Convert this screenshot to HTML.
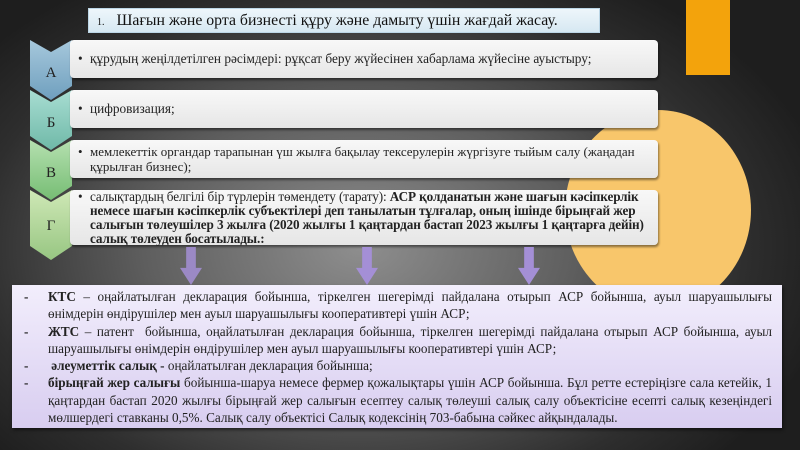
<!DOCTYPE html>
<html><head><meta charset="utf-8"><style>
html,body{margin:0;padding:0}
body{width:800px;height:450px;overflow:hidden;position:relative;font-family:"Liberation Serif",serif;
background:radial-gradient(ellipse 60% 70% at 45% 55%,#8e8e8e 0%,#5e5e5e 45%,#2e2e2e 80%,#1e1e1e 100%);}
.abs{position:absolute}
.orange{left:686px;top:0;width:44px;height:75px;background:#f3a30c}
.circle{left:565px;top:110px;width:186px;height:200px;border-radius:50%;background:#f8c66b}
.title{left:88px;top:8px;width:512px;height:25px;background:linear-gradient(#eef6fb,#d6e8f2);border:1px solid #bcd6e6;box-sizing:border-box;font-size:15.8px;line-height:24px;color:#111;padding-left:8px;white-space:nowrap}
.title small{font-size:10px;margin-right:12px}
.box{left:70px;width:588px;background:linear-gradient(#f8f8f8,#e6e6e6);border-radius:4px;box-shadow:1px 2px 2px rgba(0,0,0,.45);font-size:13.3px;color:#222;box-sizing:border-box;padding:0 8px 0 20px;display:flex;align-items:center}
.box span.b{position:absolute;left:8px}
.chev{left:30px;width:42px;clip-path:polygon(0 0,50% 12px,100% 0,100% calc(100% - 14px),50% 100%,0 calc(100% - 14px));color:#222;font-size:15px;text-align:center;box-sizing:border-box}
.arrow{width:22px;height:38px;background:#a48fd6;clip-path:polygon(28% 0,72% 0,72% 55%,100% 55%,50% 100%,0 55%,28% 55%)}
.bottom{left:12px;top:285px;width:770px;height:143px;background:linear-gradient(#f2eefc,#d8cdf0);box-shadow:1px 2px 3px rgba(0,0,0,.5);box-sizing:border-box;padding:3px 10px 0 12px;font-size:13.2px;line-height:17.3px;color:#222;text-align:justify}
.bottom p{margin:0;padding-left:24px;position:relative}
.bottom p:before{content:"-";position:absolute;left:0;font-weight:bold}
</style></head><body>
<div class="abs orange"></div>
<div class="abs circle"></div>
<div class="abs title"><small>1.</small>Шағын және орта бизнесті құру және дамыту үшін жағдай жасау.</div>

<div class="abs chev" style="top:40px;height:60px;background:linear-gradient(#a6c8dc,#6f9fbe);padding-top:25px">А</div>
<div class="abs chev" style="top:90px;height:60px;background:linear-gradient(#a8ddd2,#6fb9a8);padding-top:25px">Б</div>
<div class="abs chev" style="top:140px;height:60px;background:linear-gradient(#b5e0b0,#76bd74);padding-top:25px">В</div>
<div class="abs chev" style="top:190px;height:70px;background:linear-gradient(#cfe8b6,#97c682);padding-top:28px">Г</div>

<div class="abs box" style="top:40px;height:38px"><span class="b">•</span>құрудың жеңілдетілген рәсімдері: рұқсат беру жүйесінен хабарлама жүйесіне ауыстыру;</div>
<div class="abs box" style="top:90px;height:38px"><span class="b">•</span>цифровизация;</div>
<div class="abs box" style="top:140px;height:38px;line-height:15px;font-size:13px"><span class="b" style="top:4px">•</span>мемлекеттік органдар тарапынан үш жылға бақылау тексерулерін жүргізуге тыйым салу (жаңадан құрылған бизнес);</div>
<div class="abs box" style="top:190px;height:55px;line-height:14px;align-items:flex-start;padding-top:0;font-size:13.2px;letter-spacing:-0.1px"><span class="b" style="top:0">•</span><div>салықтардың белгілі бір түрлерін төмендету (тарату): <b>АСР қолданатын және шағын кәсіпкерлік немесе шағын кәсіпкерлік субъектілері деп танылатын тұлғалар, оның ішінде бірыңғай жер салығын төлеушілер 3 жылға (2020 жылғы 1 қаңтардан бастап 2023 жылғы 1 қаңтарға дейін) салық төлеуден босатылады.:</b></div></div>

<div class="abs arrow" style="left:180px;top:247px;opacity:.85"></div>
<div class="abs arrow" style="left:356px;top:247px"></div>
<div class="abs arrow" style="left:518px;top:247px"></div>

<div class="abs bottom">
<p><b>КТС</b> – оңайлатылған декларация бойынша, тіркелген шегерімді пайдалана отырып АСР бойынша, ауыл шаруашылығы өнімдерін өндірушілер мен ауыл шаруашылығы кооперативтері үшін АСР;</p>
<p><b>ЖТС</b> – патент &nbsp;бойынша, оңайлатылған декларация бойынша, тіркелген шегерімді пайдалана отырып АСР бойынша, ауыл шаруашылығы өнімдерін өндірушілер мен ауыл шаруашылығы кооперативтері үшін АСР;</p>
<p>&nbsp;<b>әлеуметтік салық -</b> оңайлатылған декларация бойынша;</p>
<p><b>бірыңғай жер салығы</b> бойынша-шаруа немесе фермер қожалықтары үшін АСР бойынша. Бұл ретте естеріңізге сала кетейік, 1 қаңтардан бастап 2020 жылғы бірыңғай жер салығын есептеу салық төлеуші салық салу объектісіне есепті салық кезеңіндегі мөлшердегі ставканы 0,5%. Салық салу объектісі Салық кодексінің 703-бабына сәйкес айқындалады.</p>
</div>
</body></html>
